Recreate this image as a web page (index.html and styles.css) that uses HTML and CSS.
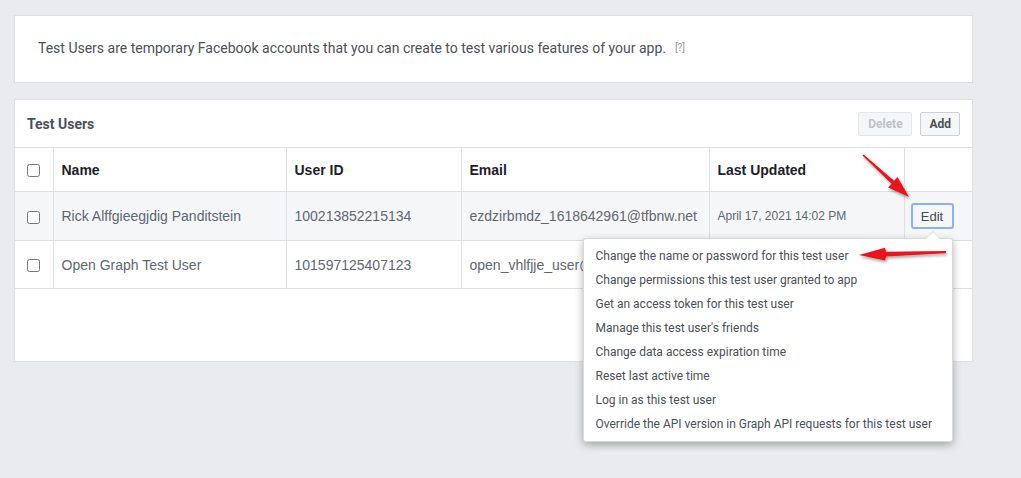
FILE: index.html
```html
<!DOCTYPE html>
<html>
<head>
<meta charset="utf-8">
<link rel="stylesheet" href="styles.css">
</head>
<body>
<div class="page">
  <div class="card intro">
    <span class="intro-text">Test Users are temporary Facebook accounts that you can create to test various features of your app.</span>
    <span class="help">[?]</span>
  </div>

  <div class="card users">
    <div class="users-head">
      <span class="users-title">Test Users</span>
      <div class="head-actions">
        <button class="btn btn-disabled">Delete</button>
        <button class="btn">Add</button>
      </div>
    </div>
    <table class="grid">
      <colgroup>
        <col class="c-check"><col class="c-name"><col class="c-id"><col class="c-mail"><col class="c-date"><col class="c-act">
      </colgroup>
      <thead>
        <tr>
          <th class="chk"><input type="checkbox"></th>
          <th>Name</th>
          <th>User ID</th>
          <th>Email</th>
          <th>Last Updated</th>
          <th class="act"></th>
        </tr>
      </thead>
      <tbody>
        <tr class="hover">
          <td class="chk"><input type="checkbox"></td>
          <td>Rick Alffgieegjdig Panditstein</td>
          <td>100213852215134</td>
          <td>ezdzirbmdz_1618642961@tfbnw.net</td>
          <td class="date">April 17, 2021 14:02 PM</td>
          <td class="act">
            <div class="edit-wrap">
              <button class="edit">Edit</button>
              <div class="menu">
                <div class="menu-item">Change the name or password for this test user</div>
                <div class="menu-item">Change permissions this test user granted to app</div>
                <div class="menu-item">Get an access token for this test user</div>
                <div class="menu-item">Manage this test user's friends</div>
                <div class="menu-item">Change data access expiration time</div>
                <div class="menu-item">Reset last active time</div>
                <div class="menu-item">Log in as this test user</div>
                <div class="menu-item">Override the API version in Graph API requests for this test user</div>
              </div>
            </div>
          </td>
        </tr>
        <tr>
          <td class="chk"><input type="checkbox"></td>
          <td>Open Graph Test User</td>
          <td>101597125407123</td>
          <td>open_vhlfjje_user@tfbnw.net</td>
          <td class="date"></td>
          <td class="act"></td>
        </tr>
      </tbody>
    </table>
  </div>
</div>

<svg class="annot" width="1021" height="478" viewBox="0 0 1021 478">
  <defs>
    <filter id="sh" x="-20%" y="-20%" width="140%" height="140%">
      <feDropShadow dx="1" dy="2" stdDeviation="1.5" flood-color="#000" flood-opacity="0.35"/>
    </filter>
  </defs>
  <polygon filter="url(#sh)" fill="#e8141c"
    points="862.4,155.6 891.5,183.7 888.1,187.4 909,197 897.5,177.0 894.1,180.7 863.6,154.4"/>
  <polygon filter="url(#sh)" fill="#e8141c"
    points="946,251 886,251.8 885,247.8 859,255 885.2,260.5 886,256.6 946,253.2"/>
</svg>
</body>
</html>
```

FILE: styles.css
```css
html, body {
  margin: 0;
  padding: 0;
}
body {
  background: #e9ebee;
  width: 1021px;
  height: 478px;
  overflow: hidden;
  position: relative;
}
.page {
  padding: 15px 0 0 14px;
  width: 959px;
  display: flex;
  flex-direction: column;
  gap: 16px;
}
.card {
  background: #fff;
  border: 1px solid #dddfe2;
  box-sizing: border-box;
}
.intro {
  height: 68px;
  display: flex;
  align-items: center;
  padding: 0 0 3px 23px;
  font-family: Roboto, "Liberation Sans", sans-serif;
}
.intro-text {
  font-size: 14px;
  color: #4b4f56;
}
.help {
  font-size: 10px;
  color: #90949c;
  margin-left: 9px;
}
.users {
  height: 263px;
  position: relative;
}
.users-head {
  height: 48px;
  box-sizing: border-box;
  border-bottom: 1px solid #dddfe2;
  display: flex;
  align-items: center;
  justify-content: space-between;
  padding: 0 12px 0 12px;
}
.users-title {
  font-family: Roboto, "Liberation Sans", sans-serif;
  font-weight: 700;
  font-size: 14px;
  color: #4b4f56;
}
.head-actions {
  display: flex;
  gap: 8px;
  margin-top: 1px;
}
.btn {
  font-family: Roboto, "Liberation Sans", sans-serif;
  font-weight: 700;
  font-size: 12px;
  height: 24px;
  padding: 0 8px;
  border: 1px solid #ced0d4;
  border-radius: 2px;
  background: #f5f6f7;
  color: #4b4f56;
}
.btn-disabled {
  color: #bec3c9;
  border-color: #e4e6eb;
  width: 54px;
}
.grid {
  width: 957px;
  border-collapse: collapse;
  table-layout: fixed;
  font-family: "Liberation Sans", Arial, sans-serif;
}
.c-check { width: 38px; }
.c-name { width: 233px; }
.c-id { width: 175px; }
.c-mail { width: 248px; }
.c-date { width: 195px; }
.c-act { width: 68px; }
.grid th, .grid td {
  border-right: 1px solid #dddfe2;
  border-bottom: 1px solid #dddfe2;
  padding: 0 8px;
  text-align: left;
  white-space: nowrap;
}
.grid th {
  height: 43px;
  font-size: 14px;
  font-weight: 700;
  color: #1d2129;
}
.grid td {
  height: 48px;
  font-size: 14px;
  color: #606770;
}
.grid tr:last-child td {
  height: 47px;
}
.grid td.date {
  font-size: 12px;
}
.grid .act {
  border-right: none;
  padding: 0 0 0 6px;
}
.grid .chk {
  padding: 0 0 0 9px;
}
.grid .chk input {
  margin: 0 0 0 3px;
  width: 13px;
  height: 13px;
  vertical-align: middle;
}
.grid td:nth-child(2), .grid td:nth-child(3), .grid td:nth-child(4), .grid td:nth-child(5),
.grid th:nth-child(2), .grid th:nth-child(3), .grid th:nth-child(4), .grid th:nth-child(5) {
  overflow: hidden;
}
tr.hover td {
  background: #f5f6f7;
}
.edit-wrap {
  position: relative;
  display: inline-block;
}
.edit {
  font-family: "Liberation Sans", Arial, sans-serif;
  font-size: 13px;
  color: #444950;
  height: 26px;
  width: 43px;
  padding: 0;
  background: #f5f6f7;
  border: 2px solid #8cb0f4;
  border-radius: 3px;
  display: block;
}
.menu {
  position: absolute;
  top: 35px;
  right: 1px;
  width: 370px;
  box-sizing: border-box;
  background: #fff;
  border: 1px solid rgba(0, 0, 0, 0.15);
  border-radius: 3px;
  box-shadow: 0 3px 8px rgba(0, 0, 0, 0.3);
  padding: 5px 0 5px;
  z-index: 5;
  font-family: Roboto, "Liberation Sans", sans-serif;
}
.menu::before, .menu::after {
  content: "";
  position: absolute;
  right: 12px;
  width: 0;
  height: 0;
  border-left: 7px solid transparent;
  border-right: 7px solid transparent;
}
.menu::before {
  top: -8px;
  border-bottom: 8px solid rgba(0, 0, 0, 0.15);
}
.menu::after {
  top: -7px;
  border-bottom: 7px solid #fff;
}
.menu-item {
  height: 24px;
  line-height: 24px;
  padding: 0 12px;
  font-size: 12px;
  color: #4b4f56;
  white-space: nowrap;
}
.annot {
  position: absolute;
  left: 0;
  top: 0;
  pointer-events: none;
  z-index: 10;
}
```
